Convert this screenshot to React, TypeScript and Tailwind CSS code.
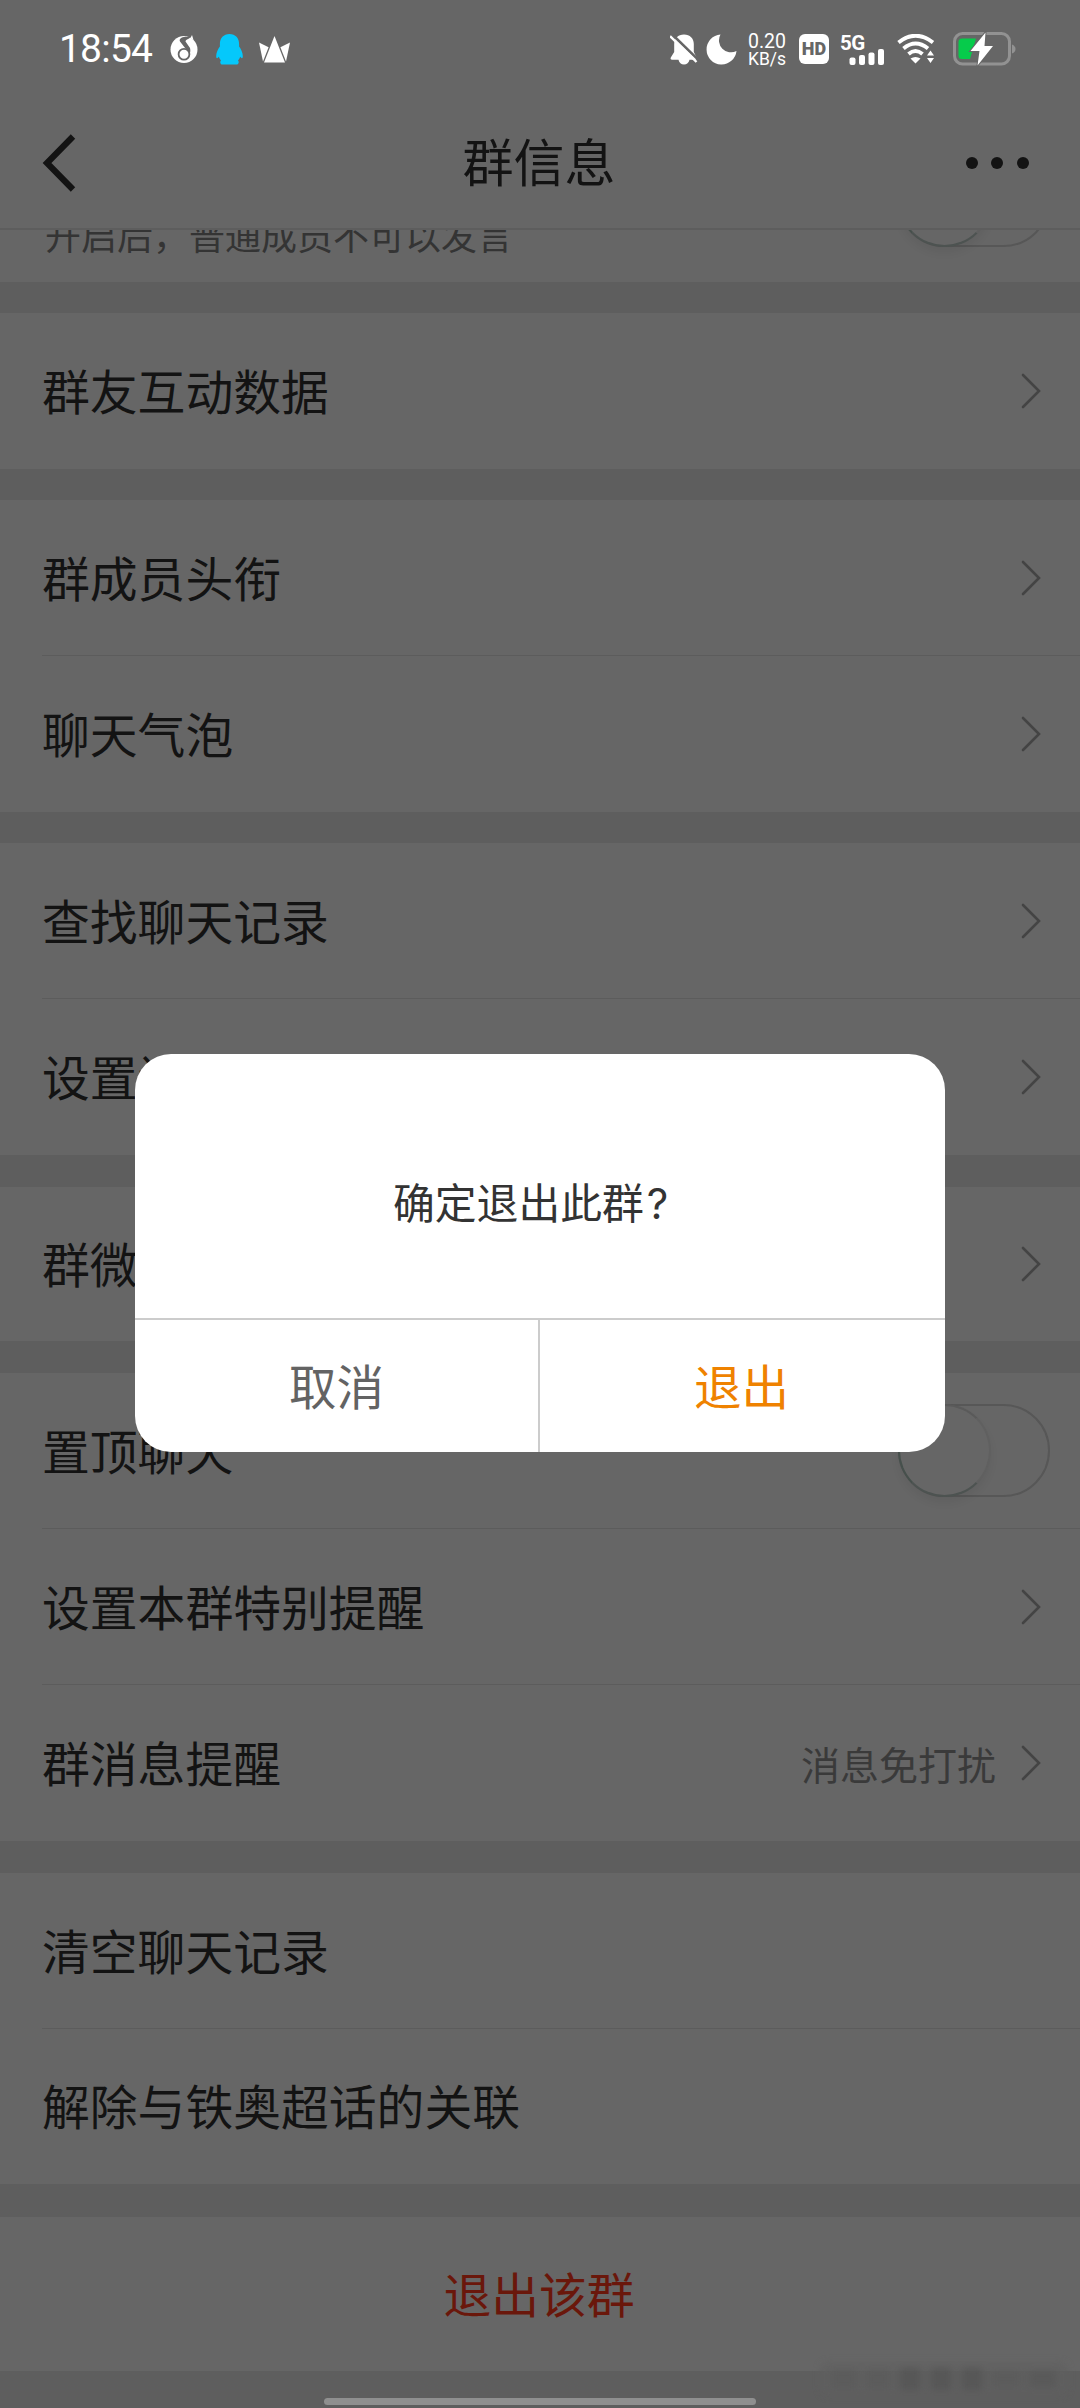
import React from "react";

function Chevron() {
  return (
    <svg className="h-[36px] w-[22px] shrink-0" viewBox="0 0 22 36" fill="none" stroke="#444444" strokeWidth="2.6" strokeLinecap="round">
      <path d="M2 2 L18 18 L2 34" />
    </svg>
  );
}

function Toggle() {
  return (
    <div className="h-[93px] w-[152px] shrink-0 rounded-full border-2 border-[#575757]">
      <div className="-mt-0.5 -ml-0.5 h-[93px] w-[93px] rounded-full border-2 border-t-[#5a5a5a] border-r-[#606060] border-b-[#4d5351] border-l-[#46504c] bg-[#666666] shadow-[0_6px_9px_rgba(0,0,0,0.06)]" />
    </div>
  );
}

type RowProps = {
  label: string;
  height?: string;
  divider?: boolean;
  value?: string;
  end?: "chevron" | "toggle" | "none";
};

function Row({ label, height = "h-[156px]", divider = false, value, end = "chevron" }: RowProps) {
  return (
    <div className={`${height} pl-[42px]`}>
      <div
        className={`flex h-full items-center justify-between border-b ${divider ? "border-[#5c5c5c]" : "border-transparent"} ${end === "toggle" ? "pr-[30px]" : "pr-[37px]"}`}
      >
        <span className="pb-[2px] text-[47.8px] leading-[70px] whitespace-nowrap">{label}</span>
        {end !== "none" && (
          <div className="flex items-center">
            {value && <span className="mr-[25px] text-[39px] leading-[56px] text-[#3a3a3a]">{value}</span>}
            {end === "toggle" ? <Toggle /> : <Chevron />}
          </div>
        )}
      </div>
    </div>
  );
}

function StatusBar() {
  return (
    <div className="flex h-[98px] shrink-0 items-center pr-[64px] pl-[59px] font-[Roboto] text-white">
      <span className="w-[111px] pt-px text-[39px] leading-none tracking-[-0.8px]">18:54</span>
      <svg className="h-[28px] w-[28px]" viewBox="0 0 28 28">
        <circle cx="14" cy="14.500" r="13.500" fill="#fff" />
        <path d="M10.500 3.500C13 1 17 2.500 21 .5C20.500 4.500 15.500 4 15.500 6.500L20 13C20.500 15 20.500 17 19.800 18H16.500L17 15.500L10 6.500C9.500 5.500 9.500 4.500 10.500 3.500Z" fill="#666" />
        <circle cx="14" cy="19.300" r="5.400" fill="#fff" stroke="#666" strokeWidth="1.800" />
        <path d="M20.500 3L22 0L23.500 5Z" fill="#fff" />
      </svg>
      <svg className="ml-[18px] h-[31px] w-[27px]" viewBox="0 0 27 31">
        <path
          d="M13.5 0C7.5 0 3.9 4.2 3.9 10v2.5C2 15 .2 18.5.2 22c0 2.5 1 3 2.6.8.4 1.3 1.2 2.6 2.2 3.6-1.2.8-1 3.8 1.4 4.2h14.2c2.4-.4 2.6-3.4 1.4-4.2 1-1 1.800-2.300 2.200-3.600 1.600 2.200 2.600 1.700 2.600-.8 0-3.500-1.800-7-3.700-9.500V10C23.100 4.200 19.500 0 13.500 0Z"
          fill="#05c8fb"
        />
      </svg>
      <svg className="ml-[16px] h-[27px] w-[31px]" viewBox="0 0 31 27" fill="#fff">
        <path d="M15.500 0 L26 26.500 H5Z" />
        <path d="M0 6.500 L9.600 11.200 L4 25.500Z" />
        <path d="M31 6.500 L21.400 11.200 L27 25.500Z" />
      </svg>

      <svg className="ml-auto h-[31px] w-[28px]" viewBox="0 0 28 31">
        <path d="M14 .5c-6 0-9.800 4-9.800 9.500v8L.8 23.500c-.6 1.300 0 2.300 1.300 2.300H8.500c.6 2.900 2.700 4.700 5.500 4.700s4.900-1.800 5.500-4.700h5.800c1.300 0 2-.9 1.300-2.200L23.800 18v-8C23.800 4.500 20 .5 14 .5Z" fill="#fff" />
        <path d="M1.800 0 L29 26.500" stroke="#666" strokeWidth="2.600" />
        <path d="M0 2.200 L26.500 28" stroke="#fff" strokeWidth="2.400" />
      </svg>
      <svg className="ml-[8px] h-[31px] w-[31px]" viewBox="0 0 31 31">
        <path d="M14.500 .5A15 15 0 1 0 30.500 17A12 12 0 0 1 14.500 .5Z" fill="#fff" />
      </svg>
      <div className="ml-[7px] flex w-[46px] flex-col items-center pt-[3px] text-[19.500px] leading-[17.500px]">
        <span>0.20</span>
        <span className="text-[17.500px]">KB/s</span>
      </div>
      <div className="ml-[9px] flex h-[30px] w-[30px] shrink-0 items-center justify-center rounded-[6px] bg-white text-[18px] leading-none font-black text-[#666666]">
        HD
      </div>
      <div className="ml-[11px] flex h-[31px] w-[45px]">
        <span className="w-[9px] pt-px text-[20.500px] leading-[17px] font-bold tracking-[-0.6px]">5G</span>
        <svg className="h-[31px] w-[36px] shrink-0" viewBox="0 0 36 31" fill="#fff">
          <rect x="0.500" y="23.500" width="6" height="7.500" rx="2" />
          <rect x="10" y="21" width="6" height="10" rx="2" />
          <rect x="19.500" y="18.500" width="6" height="12.500" rx="2" />
          <rect x="29" y="15" width="6" height="16" rx="2" />
        </svg>
      </div>
      <svg className="ml-[12px] h-[30px] w-[38px]" viewBox="0 0 38 30" fill="none" stroke="#fff">
        <path d="M1.500 8.500Q18.500 -5 36 8.500" strokeWidth="3.900" />
        <path d="M6.500 14.500Q18.500 4.500 31 14.500" strokeWidth="3.900" />
        <path d="M11.500 20Q18.500 14 25.500 20" strokeWidth="3.900" />
        <path d="M13.500 24.500Q18.500 21.500 23.500 24.500L18.500 29.500Z" fill="#fff" stroke="none" />
        <path d="M33.500 16.500L37 21.500H30ZM33.500 29L30 24H37Z" fill="#fff" stroke="none" />
      </svg>
      <svg className="ml-[18px] h-[36px] w-[63px]" viewBox="0 0 63 36">
        <rect x="1.500" y="2.500" width="55" height="30.500" rx="8" fill="none" stroke="#929292" strokeWidth="3" />
        <path d="M59 13.500Q62.500 15 62.500 18Q62.500 21 59 22.500Z" fill="#929292" />
        <path d="M9 7.500H23L17 28H9Q5.500 28 5.500 24.500V11Q5.500 7.500 9 7.500Z" fill="#06cb4b" />
        <path d="M32.500 1.500L17.500 20H26.500L24.500 34.500L40 15H31.500Z" fill="#fff" stroke="#666" strokeWidth="2" paintOrder="stroke" />
      </svg>
    </div>
  );
}

function Header() {
  return (
    <header className="flex h-[132px] shrink-0 items-center justify-between border-b-2 border-[#5d5d5d] pr-[51px] pl-[42px]">
      <svg className="h-[58px] w-[70px]" viewBox="0 0 70 58" fill="none" stroke="#131313" strokeWidth="6.200">
        <path d="M31 2.500 L5 29 L31 55.500" />
      </svg>
      <h1 className="pb-[6px] text-[51px] leading-[70px] font-normal">群信息</h1>
      <div className="flex w-[63px] justify-between">
        <i className="h-[12px] w-[12px] rounded-full bg-[#131313]" />
        <i className="h-[12px] w-[12px] rounded-full bg-[#131313]" />
        <i className="h-[12px] w-[12px] rounded-full bg-[#131313]" />
      </div>
    </header>
  );
}

function Dialog() {
  return (
    <div className="absolute inset-x-0 top-[1054px] mx-auto flex h-[398px] w-[810px] flex-col overflow-hidden rounded-[36px] bg-white">
      <p className="flex h-[264px] items-end justify-center pb-[87px] text-[41.800px] leading-[60px] text-[#333333]">
        <span className="w-[294px]">
          确定退出此群<span className="pl-[3px] font-[Inter] text-[42px] leading-none">?</span>
        </span>
      </p>
      <div className="flex flex-1 border-t-2 border-[#cccccc] text-[47.500px] leading-[70px]">
        <button className="flex-1 border-r-2 border-[#cccccc] pb-[2px] text-[#636363]">取消</button>
        <button className="flex-1 pr-[2px] pb-[2px] text-[#ef8200]">退出</button>
      </div>
    </div>
  );
}

export default function App() {
  return (
    <div className="relative flex h-[2408px] w-[1080px] flex-col overflow-hidden bg-[#5e5e5e] font-['Noto_Sans_CJK_SC',sans-serif] text-[#131313]">
      <div className="z-10 flex h-[230px] shrink-0 flex-col bg-[#666666]">
        <StatusBar />
        <Header />
      </div>
      <main className="flex flex-col">
        <section className="flex h-[52px] items-end justify-between bg-[#666666] pr-[30px] pl-[45px]">
          <span className="pb-[22px] text-[36px] leading-[52px] text-[#343434]">开启后，普通成员不可以发言</span>
          <div className="pb-[35px]">
            <Toggle />
          </div>
        </section>
        <section className="mt-[31px] bg-[#666666]">
          <Row label="群友互动数据" />
        </section>
        <section className="mt-[31px] bg-[#666666]">
          <Row label="群成员头衔" divider />
          <Row label="聊天气泡" />
        </section>
        <section className="mt-[31px] bg-[#666666]">
          <Row label="查找聊天记录" divider />
          <Row label="设置该群" />
        </section>
        <section className="mt-[32px] bg-[#666666]">
          <Row label="群微博" height="h-[154px]" />
        </section>
        <section className="mt-[32px] bg-[#666666]">
          <Row label="置顶聊天" divider end="toggle" />
          <Row label="设置本群特别提醒" divider />
          <Row label="群消息提醒" value="消息免打扰" />
        </section>
        <section className="mt-[32px] bg-[#666666]">
          <Row label="清空聊天记录" divider end="none" />
          <Row label="解除与铁奥超话的关联" height="h-[155px]" end="none" />
        </section>
        <section className="mt-[33px] flex h-[154px] items-center justify-center bg-[#666666]">
          <span className="pr-[2px] pb-[2px] text-[47.800px] leading-[70px] text-[#6a170b]">退出该群</span>
        </section>
      </main>
      {/* Smudged watermark in the corner */}
      <div className="absolute right-[12px] bottom-[12px] flex h-[34px] w-[248px] items-center justify-between rounded-[8px] bg-[#5f5f5f]/60 px-3 blur-[3px]">
        <i className="h-[18px] w-[24px] bg-[#5a5a5a]/50" />
        <i className="h-[18px] w-[22px] bg-[#5a5a5a]/50" />
        <i className="h-[22px] w-[20px] bg-[#545454]/60" />
        <i className="h-[22px] w-[20px] bg-[#545454]/60" />
        <i className="h-[22px] w-[20px] bg-[#545454]/60" />
        <i className="h-[14px] w-[26px] bg-[#595959]/50" />
        <i className="h-[16px] w-[26px] bg-[#565656]/50" />
      </div>
      <div className="absolute bottom-[3px] left-[324px] h-[7px] w-[432px] rounded-full bg-[#8f8f8f]" />
      <Dialog />
    </div>
  );
}
